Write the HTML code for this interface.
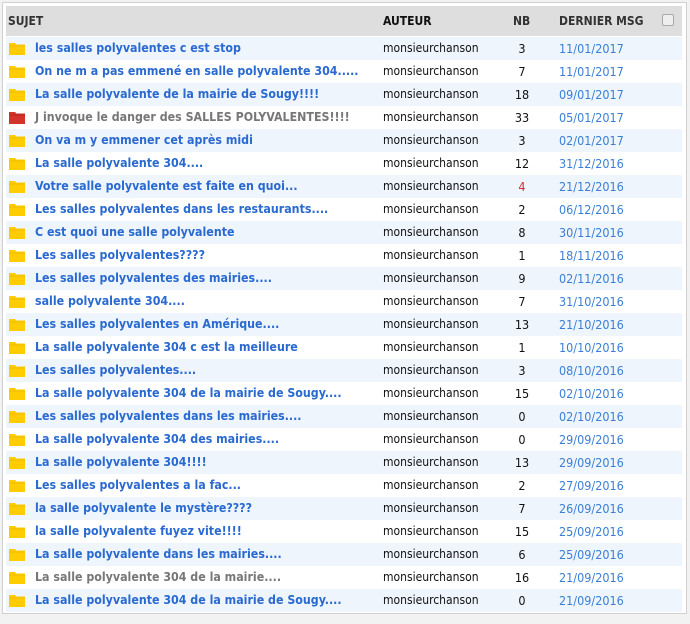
<!DOCTYPE html>
<html><head><meta charset="utf-8"><style>
html,body{margin:0;padding:0;background:#f2f2f2;width:690px;height:624px;overflow:hidden;font-family:Tahoma,"DejaVu Sans Condensed","Liberation Sans",sans-serif;}
.box{position:absolute;left:2px;top:2px;width:683px;height:610px;background:#fff;border:1px solid #d0d0d0;}
.hd{position:absolute;left:3px;top:3px;width:676px;height:30px;background:#dedede;font-weight:bold;font-size:12px;color:#333;}
.hd span{position:absolute;top:8px;}
.cb{position:absolute;left:656px;top:8px;width:10px;height:10px;border:1px solid #aaa;border-radius:2px;background:#eee;}
.row{position:absolute;left:3px;width:676px;height:23px;font-size:12.5px;}
.row.a{background:#eef5fd;}
.ic{position:absolute;left:3px;top:6px;width:16px;height:12px;}
.t{position:absolute;left:29px;top:4px;font-weight:bold;color:#2a6ad0;white-space:nowrap;font-size:12.3px}
.t.g{color:#777;}
.au{position:absolute;left:377px;top:4px;color:#111;font-size:12px}
.nb{position:absolute;left:500px;width:32px;text-align:center;top:4px;color:#111;}
.nb.r{color:#d03030;}
.dt{position:absolute;left:553px;top:4px;color:#3a7fd5;}
</style></head><body>
<div class="box">
<div class="hd"><span style="left:2px">SUJET</span><span style="left:377px;color:#111">AUTEUR</span><span style="left:507px">NB</span><span style="left:553px">DERNIER MSG</span><div class="cb"></div></div>
</div>
<div id="rows"></div>
<script>
var d=[
["les salles polyvalentes c est stop",3,"11/01/2017"],
["On ne m a pas emmené en salle polyvalente 304.....",7,"11/01/2017"],
["La salle polyvalente de la mairie de Sougy!!!!",18,"09/01/2017"],
["J invoque le danger des SALLES POLYVALENTES!!!!",33,"05/01/2017","g"],
["On va m y emmener cet après midi",3,"02/01/2017"],
["La salle polyvalente 304....",12,"31/12/2016"],
["Votre salle polyvalente est faite en quoi...",4,"21/12/2016","","r"],
["Les salles polyvalentes dans les restaurants....",2,"06/12/2016"],
["C est quoi une salle polyvalente",8,"30/11/2016"],
["Les salles polyvalentes????",1,"18/11/2016"],
["Les salles polyvalentes des mairies....",9,"02/11/2016"],
["salle polyvalente 304....",7,"31/10/2016"],
["Les salles polyvalentes en Amérique....",13,"21/10/2016"],
["La salle polyvalente 304 c est la meilleure",1,"10/10/2016"],
["Les salles polyvalentes....",3,"08/10/2016"],
["La salle polyvalente 304 de la mairie de Sougy....",15,"02/10/2016"],
["Les salles polyvalentes dans les mairies....",0,"02/10/2016"],
["La salle polyvalente 304 des mairies....",0,"29/09/2016"],
["La salle polyvalente 304!!!!",13,"29/09/2016"],
["Les salles polyvalentes a la fac...",2,"27/09/2016"],
["la salle polyvalente le mystère????",7,"26/09/2016"],
["la salle polyvalente fuyez vite!!!!",15,"25/09/2016"],
["La salle polyvalente dans les mairies....",6,"25/09/2016"],
["La salle polyvalente 304 de la mairie....",16,"21/09/2016","g"],
["La salle polyvalente 304 de la mairie de Sougy....",0,"21/09/2016"]];
var h="";
d.forEach(function(r,i){
var c=i==3?"#d2332b":"#ffcc00";
h+='<div class="row'+(i%2==0?' a':'')+'" style="top:'+(37+i*23)+'px;left:6px">'+
'<svg class="ic" viewBox="0 0 16 12"><path d="M0 0h6l1.5 1.5H16V12H0z" fill="'+c+'"/><path d="M0 3h16" stroke="'+(i==3?'#a82020':'#e8b800')+'" stroke-width="0.7"/></svg>'+
'<span class="t '+(r[3]||'')+'">'+r[0]+'</span><span class="au">monsieurchanson</span><span class="nb '+(r[4]||'')+'">'+r[1]+'</span><span class="dt">'+r[2]+'</span></div>';
});
document.getElementById("rows").innerHTML=h;
</script>
</body></html>
